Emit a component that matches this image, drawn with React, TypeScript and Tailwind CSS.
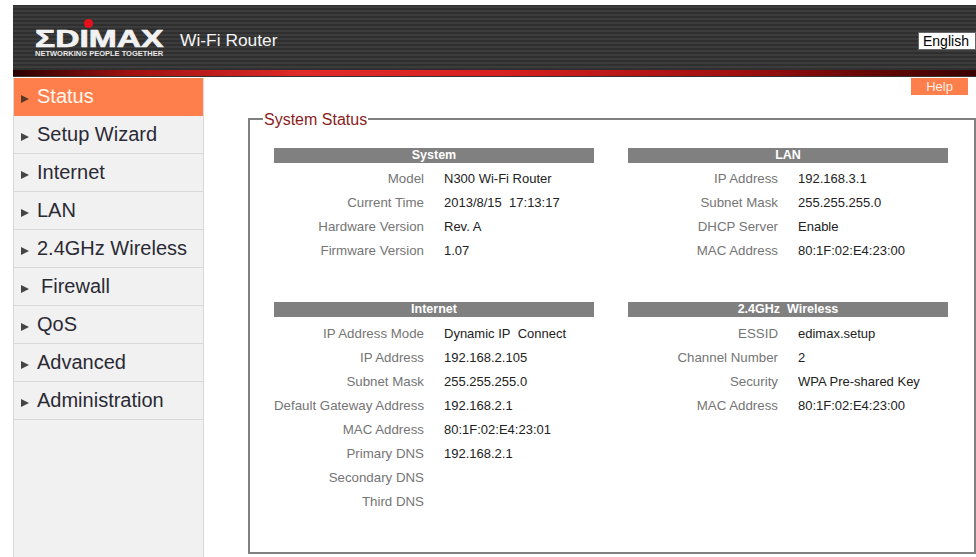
const sans = "font-['Liberation_Sans',Arial,sans-serif]";

const menu = ["Status", "Setup Wizard", "Internet", "LAN", "2.4GHz Wireless", "Firewall", "QoS", "Advanced", "Administration"];

type Section = { title: string; rows: [string, string][] };

const sections: Section[] = [
  {
    title: "System",
    rows: [
      ["Model", "N300 Wi-Fi Router"],
      ["Current Time", "2013/8/15\u00a0\u00a017:13:17"],
      ["Hardware Version", "Rev. A"],
      ["Firmware Version", "1.07"],
    ],
  },
  {
    title: "LAN",
    rows: [
      ["IP Address", "192.168.3.1"],
      ["Subnet Mask", "255.255.255.0"],
      ["DHCP Server", "Enable"],
      ["MAC Address", "80:1F:02:E4:23:00"],
    ],
  },
  {
    title: "Internet",
    rows: [
      ["IP Address Mode", "Dynamic IP\u00a0\u00a0Connect"],
      ["IP Address", "192.168.2.105"],
      ["Subnet Mask", "255.255.255.0"],
      ["Default Gateway Address", "192.168.2.1"],
      ["MAC Address", "80:1F:02:E4:23:01"],
      ["Primary DNS", "192.168.2.1"],
      ["Secondary DNS", ""],
      ["Third DNS", ""],
    ],
  },
  {
    title: "2.4GHz\u00a0\u00a0Wireless",
    rows: [
      ["ESSID", "edimax.setup"],
      ["Channel Number", "2"],
      ["Security", "WPA Pre-shared Key"],
      ["MAC Address", "80:1F:02:E4:23:00"],
    ],
  },
];

function Panel({ s, lower }: { s: Section; lower?: boolean }) {
  return (
    <div className="w-[320px]">
      <div className="h-[15px] bg-[#808080] text-center text-[12.5px] font-bold leading-[15px] text-white">{s.title}</div>
      <div className={lower ? "mt-[4px] pt-px" : "mt-[4px]"}>
        {s.rows.map(([k, v]) => (
          <div key={k} className="flex h-[24px] items-center text-[13px]">
            <div className="w-[150px] whitespace-nowrap text-right text-[13.3px] text-[#757575]">{k}</div>
            <div className="ml-[20px] whitespace-pre text-[#222222]">{v}</div>
          </div>
        ))}
      </div>
    </div>
  );
}

function Logo() {
  return (
    <div className="relative ml-[22px] mt-[14px] h-[38px] w-[130px] shrink-0">
      <div className="absolute left-[49px] top-0 h-[9px] w-[9px] rounded-full bg-[#e8101c]" />
      <div className="absolute left-0 top-[6px] origin-left scale-x-[1.4] whitespace-nowrap text-[24px] font-bold leading-[28px] text-[#f2f2f2] [-webkit-text-stroke:0.7px_#f2f2f2]">
        ΣDIMAX
      </div>
      <div className="absolute left-0 top-[30px] whitespace-nowrap text-[7.5px] font-bold leading-[9px] text-[#e8e8e8]">
        NETWORKING PEOPLE TOGETHER
      </div>
    </div>
  );
}

export default function App() {
  return (
    <div className={`${sans} h-[557px] w-[976px] overflow-hidden bg-white pt-[5px]`}>
      <header className="ml-[13px] h-[72px] bg-[#333333]">
        <div className="flex h-[65px] items-start bg-[repeating-linear-gradient(0deg,#2f2f2f_0px,#2f2f2f_2px,#3c3c3c_2px,#3c3c3c_4px)]">
          <Logo />
          <div className="ml-[15px] mt-[23px] text-[17.4px] leading-[24px] text-[#f4f4f4]">Wi-Fi Router</div>
          <div className="ml-auto mt-[27px] flex h-[18px] w-[58px] items-center border border-[#666666] bg-white pl-[4px] text-[14px] text-black">
            English
          </div>
        </div>
        <div className="h-[6px] bg-[linear-gradient(90deg,#2a0000_0%,#a01010_12%,#e02a2a_30%,#d82020_50%,#a01010_75%,#3a0000_100%)]" />
      </header>

      <div className="flex">
        <nav className="ml-[13px] mt-[1px] h-[479px] w-[191px] shrink-0 border-x border-[#d8d8d8] bg-[#f1f1f1]">
          {menu.map((m, i) => (
            <div
              key={m}
              className={
                i === 0
                  ? "flex h-[38px] items-center bg-[#ff7f4c] pb-[2px] pl-[7px] text-[20px] text-[#fff6ee]"
                  : "flex h-[38px] items-center border-b border-[#d8d8d8] pb-[2px] pl-[7px] text-[20px] text-[#2a2a35]"
              }
            >
              <svg width="8" height="8" viewBox="0 0 8 8" className="mr-[8px] mt-[6px] shrink-0">
                <polygon points="0,0 8,4 0,8" fill={i === 0 ? "#5a3a24" : "#444444"} />
              </svg>
              <span className={i === 5 ? "ml-[4px] whitespace-nowrap" : "whitespace-nowrap"}>{m}</span>
            </div>
          ))}
        </nav>

        <main className="relative flex-1">
          <div className="absolute right-[8px] top-[1px] h-[17px] w-[57px] bg-[#ff7f4c] text-center text-[13px] leading-[17px] text-[#fff0e8]">
            Help
          </div>
          <fieldset className="ml-[44px] mt-[32px] h-[445px] w-[728px] border-2 border-[#808080] pl-[13px]">
            <legend className="px-[1px] pt-[2px] text-[16px] leading-[18px] text-[#8a1c1c]">System Status</legend>
            <div className="ml-[11px] mt-[19px] grid grid-cols-[320px_320px] gap-x-[34px]">
              <div className="h-[154px]"><Panel s={sections[0]} /></div>
              <Panel s={sections[1]} />
              <Panel s={sections[2]} lower />
              <Panel s={sections[3]} lower />
            </div>
          </fieldset>
        </main>
      </div>
    </div>
  );
}
